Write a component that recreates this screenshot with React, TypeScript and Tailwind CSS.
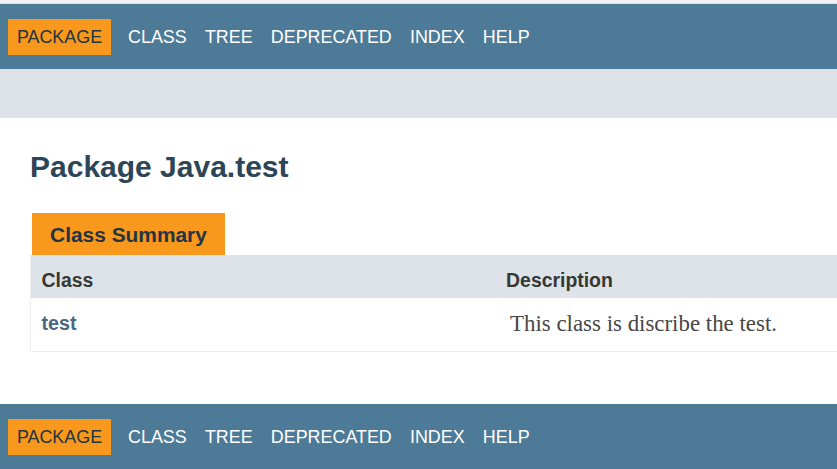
import React from "react";

function NavBar() {
  const items = ["CLASS", "TREE", "DEPRECATED", "INDEX", "HELP"];
  return (
    <div className="h-[65px] bg-[#4D7A97] flex items-start pt-[15px] pl-[8px] text-[17.9px]">
      <div className="h-[36px] leading-[36px] px-[8.9px] bg-[#F8981D] text-[#253441] mr-[8px]">PACKAGE</div>
      {items.map((t) => (
        <div key={t} className="h-[36px] leading-[36px] px-[9.1px] text-white">
          {t}
        </div>
      ))}
    </div>
  );
}

export default function App() {
  return (
    <div className="w-[837px] h-[469px] overflow-hidden bg-white font-['Liberation_Sans',Arial,sans-serif]">
      <div className="h-[3px] bg-[#f1f1f1]" />
      <div className="h-[1px] bg-[#e2e2e2]" />
      <NavBar />
      <div className="h-[49px] bg-[#dee3e9]" />
      <div className="pt-[31.5px]">
        <h1 className="pl-[30px] text-[30px] font-bold leading-[34px] text-[#2c4557]">Package Java.test</h1>
        <div className="mt-[29.5px] ml-[32px] inline-block h-[42px] w-[193px] text-center bg-[#F8981D] text-[#253441] text-[20.9px] font-bold leading-[43.8px]">
          Class Summary
        </div>
        <div className="ml-[30px] w-[830px] border-l border-b border-[#eeeeee]">
          <div className="flex h-[43px] bg-[#dee3e9] text-[#353833] text-[19.4px] font-bold leading-[26.7px]">
            <div className="w-[464.5px] pt-[11.8px] pl-[10.6px]">Class</div>
            <div className="pt-[11.8px] pl-[10.6px]">Description</div>
          </div>
          <div className="flex h-[53px] bg-white">
            <div className="w-[464.5px] pt-[11.8px] pl-[10.6px] text-[19.6px] font-bold leading-[26.7px] text-[#4A6782]">test</div>
            <div className="pt-[11.8px] pl-[14.5px] text-[22.9px] leading-[27px] text-[#474747] font-['Liberation_Serif','Times_New_Roman',serif]">
              This class is discribe the test.
            </div>
          </div>
        </div>
      </div>
      <div className="mt-[52px]">
        <NavBar />
      </div>
    </div>
  );
}
